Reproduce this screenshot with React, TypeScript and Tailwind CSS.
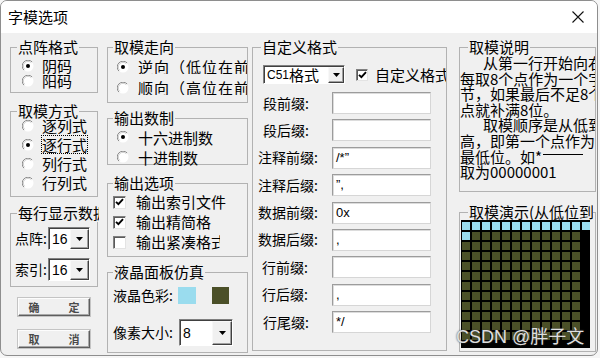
import React from "react";

// classic win32 style widgets
function RadioDot({ checked }: { checked?: boolean }) {
  return (
    <svg width="12" height="12" viewBox="0 0 12 12" className="shrink-0">
      <circle cx="6" cy="6" r="5.5" fill="#fff" />
      <path d="M1.9 10.1 A5.6 5.6 0 0 1 10.1 1.9" fill="none" stroke="#8c8c8c" strokeWidth="1" />
      <path d="M2.7 9.3 A4.6 4.6 0 0 1 9.3 2.7" fill="none" stroke="#cfcfcf" strokeWidth="1" />
      {checked && <circle cx="6" cy="6" r="2" fill="#000" />}
    </svg>
  );
}

function Radio({
  label,
  checked = false,
  focus = false,
  row,
  gap,
  labelClass = "",
}: {
  label: string;
  checked?: boolean;
  focus?: boolean;
  row: string;
  gap: string;
  labelClass?: string;
}) {
  return (
    <div className={`flex items-center whitespace-nowrap ${row}`}>
      <RadioDot checked={checked} />
      <span
        className={`${gap} text-[15px] ${focus ? "leading-[17px] outline-1 outline-dotted outline-black" : "leading-[15px]"} ${labelClass}`}
      >
        {label}
      </span>
    </div>
  );
}

function CheckBox({ checked = false, size }: { checked?: boolean; size: string }) {
  return (
    <span
      className={`${size} shrink-0 bg-white border border-t-[#808080] border-l-[#808080] border-b-[#e3e3e3] border-r-[#e3e3e3] shadow-[inset_1px_1px_0_#5a5a5a] flex items-center justify-center`}
    >
      {checked && (
        <svg width="9" height="8" viewBox="0 0 9 8">
          <path d="M1 3.8 L3.4 6.2 L8 1.2" stroke="#000" strokeWidth="1.9" fill="none" />
        </svg>
      )}
    </span>
  );
}

function Combo({ children, className, btn }: { children: React.ReactNode; className: string; btn: string }) {
  return (
    <div
      className={`flex bg-white border border-t-[#808080] border-l-[#808080] border-b-white border-r-white shadow-[inset_1px_1px_0_#404040] ${className}`}
    >
      <span className="flex-1 flex items-center pl-[3px] pt-[1px] whitespace-nowrap font-['Liberation_Sans','Noto_Sans_CJK_SC',sans-serif]">
        {children}
      </span>
      <span
        className={`${btn} mt-[1px] bg-[#f0f0f0] border border-t-[#f8f8f8] border-l-[#f8f8f8] border-b-[#404040] border-r-[#404040] shadow-[inset_-1px_-1px_0_#a0a0a0] flex items-center justify-center`}
      >
        <svg width="7" height="4" viewBox="0 0 7 4">
          <path d="M0 0 H7 L3.5 4 Z" fill="#000" />
        </svg>
      </span>
    </div>
  );
}

function TextBox({ value }: { value: string }) {
  return (
    <div className="w-[99px] h-[22px] bg-white border border-t-[#9c9c9c] border-l-[#9c9c9c] border-b-[#d6d6d6] border-r-[#d6d6d6] shadow-[inset_1px_1px_0_#dcdcdc] flex items-center pl-[3px] text-[13px] font-['Liberation_Sans','Noto_Sans_CJK_SC',sans-serif]">
      {value}
    </div>
  );
}

function Group({
  title,
  className = "",
  legendClass = "",
  children,
}: {
  title: string;
  className?: string;
  legendClass?: string;
  children?: React.ReactNode;
}) {
  return (
    <fieldset className={`min-w-0 border border-[#b2b2b2] ${className}`}>
      <legend className={`px-[1px] text-[15px] leading-[18px] whitespace-nowrap ${legendClass}`}>{title}</legend>
      {children}
    </fieldset>
  );
}

function Btn({ a, b }: { a: string; b: string }) {
  return (
    <div className="ml-[8px] w-[72px] h-[18px] bg-[#f0f0f0] border border-t-[#fdfdfd] border-l-[#fdfdfd] border-b-[#5e5e5e] border-r-[#5e5e5e] shadow-[inset_-1px_-1px_0_#a8a8a8,0_0_0_1px_#c4c4c4] flex items-center justify-center gap-[29px] text-[11px] leading-[13px] font-bold text-[#4a4a4a]">
      <span>{a}</span>
      <span>{b}</span>
    </div>
  );
}

const fmtRows: [string, string, string][] = [
  ["段前缀:", "", "pl-[10px]"],
  ["段后缀:", "", "pl-[10px]"],
  ["注释前缀:", "/*”", "pl-[5px]"],
  ["注释后缀:", "”,", "pl-[5px]"],
  ["数据前缀:", "0x", "pl-[5px]"],
  ["数据后缀:", ",", "pl-[5px]"],
  ["行前缀:", "", "pl-[9px]"],
  ["行后缀:", ",", "pl-[9px]"],
  ["行尾缀:", "*/", "pl-[10px]"],
];

const note = [
  { t: "从第一行开始向右", i: true },
  { t: "每取8个点作为一个字", i: false },
  { t: "节，如果最后不足8个", i: false },
  { t: "点就补满8位。", i: false },
  { t: "取模顺序是从低到", i: true },
  { t: "高，即第一个点作为", i: false },
  { t: "最低位。如*", i: false, dash: true },
  { t: "取为00000001", i: false },
];

export default function App() {
  const cells = Array.from({ length: 12 * 13 }, (_, i) => {
    const r = Math.floor(i / 13);
    const c = i % 13;
    if (r === 0 || (r === 1 && c === 0)) return "bg-[#9adcee]";
    if (c === 12) return "bg-transparent";
    return "bg-[#4b5028]";
  });

  return (
    <div className="w-[600px] h-[358px] bg-[#f6f6f6] font-['Noto_Sans_CJK_SC',sans-serif] text-black">
      <div className="relative w-[598px] h-[356px] rounded-[7px] border border-[#8e8e8e] bg-[#f0f0f0] overflow-hidden">
        {/* title bar */}
        <div className="h-[32px] bg-white flex items-center justify-between pl-[7px] pr-[13px]">
          <span className="text-[15px] leading-[18px]">字模选项</span>
          <svg width="12" height="12" viewBox="0 0 12 12">
            <path d="M0.5 0.5 L11.5 11.5 M11.5 0.5 L0.5 11.5" stroke="#111" strokeWidth="1.1" />
          </svg>
        </div>

        <div className="flex pt-[5px] pl-[9px]">
          {/* column 1 */}
          <div className="w-[88px] flex flex-col">
            <Group title="点阵格式" className="h-[55px]" legendClass="ml-[6px]">
              <div className="mt-[2px] pl-[11px]">
                <Radio checked label="阴码" row="h-[15px]" gap="ml-[8px]" />
                <Radio label="阳码" row="h-[15px]" gap="ml-[8px]" />
              </div>
            </Group>
            <Group title="取模方式" className="mt-[9px] h-[95px]" legendClass="ml-[6px]">
              <div className="-mt-[4px] pl-[11px]">
                <Radio label="逐列式" row="h-[19px]" gap="ml-[8px]" />
                <Radio checked focus label="逐行式" row="h-[19px]" gap="ml-[8px]" />
                <Radio label="列行式" row="h-[19px]" gap="ml-[8px]" />
                <Radio label="行列式" row="h-[19px]" gap="ml-[8px]" />
              </div>
            </Group>
            <Group title="每行显示数据" className="mt-[7px] h-[83px]" legendClass="ml-[6px] max-w-[82px] overflow-hidden">
              <div className="mt-[5px] pl-[4px] flex flex-col gap-[8px]">
                <div className="flex items-center">
                  <span className="w-[33px] text-[14px]">点阵:</span>
                  <Combo className="w-[42px] h-[23px] text-[14px]" btn="w-[19px]">
                    16
                  </Combo>
                </div>
                <div className="flex items-center">
                  <span className="w-[33px] text-[14px]">索引:</span>
                  <Combo className="w-[42px] h-[23px] text-[14px]" btn="w-[19px]">
                    16
                  </Combo>
                </div>
              </div>
            </Group>
            <div className="mt-[11px]">
              <Btn a="确" b="定" />
            </div>
            <div className="mt-[14px]">
              <Btn a="取" b="消" />
            </div>
          </div>

          {/* column 2 */}
          <div className="ml-[9px] w-[141px] flex flex-col">
            <Group title="取模走向" className="h-[65px]" legendClass="ml-[5px]">
              <div className="pl-[9px]">
                <Radio
                  checked
                  label="逆向（低位在前）"
                  row="h-[21px]"
                  gap="ml-[9px]"
                  labelClass="w-[112px] overflow-hidden tracking-[1px]"
                />
                <Radio
                  label="顺向（高位在前）"
                  row="h-[21px]"
                  gap="ml-[9px]"
                  labelClass="w-[112px] overflow-hidden tracking-[1px]"
                />
              </div>
            </Group>
            <Group title="输出数制" className="mt-[6px] h-[56px]" legendClass="ml-[5px]">
              <div className="pl-[9px]">
                <Radio checked label="十六进制数" row="h-[20px]" gap="ml-[9px]" />
                <Radio label="十进制数" row="h-[20px]" gap="ml-[9px]" />
              </div>
            </Group>
            <Group title="输出选项" className="mt-[9px] h-[83px]" legendClass="ml-[5px]">
              <div className="pl-[5px] text-[15px] leading-[18px] whitespace-nowrap">
                <div className="flex items-center h-[20px]">
                  <CheckBox checked size="w-[13px] h-[13px]" />
                  <span className="ml-[10px]">输出索引文件</span>
                </div>
                <div className="flex items-center h-[20px]">
                  <CheckBox checked size="w-[13px] h-[13px]" />
                  <span className="ml-[10px]">输出精简格</span>
                </div>
                <div className="flex items-center h-[20px]">
                  <CheckBox size="w-[13px] h-[13px]" />
                  <span className="ml-[10px] w-[84px] overflow-hidden">输出紧凑格式</span>
                </div>
              </div>
            </Group>
            <Group title="液晶面板仿真" className="mt-[6px] h-[90px]" legendClass="ml-[5px]">
              <div className="pl-[5px]">
                <div className="mt-[6px] flex items-center h-[17px]">
                  <span className="w-[65px] text-[14px] leading-[17px]">液晶色彩:</span>
                  <span className="w-[18px] h-[17px] bg-[#9adcee]" />
                  <span className="ml-[16px] w-[17px] h-[17px] bg-[#4b5028]" />
                </div>
                <div className="mt-[15px] flex items-center">
                  <span className="w-[66px] text-[14px]">像素大小:</span>
                  <Combo className="w-[54px] h-[27px] text-[14px]" btn="w-[20px]">
                    8
                  </Combo>
                </div>
              </div>
            </Group>
          </div>

          {/* column 3 */}
          <div className="ml-[4px] w-[195px]">
            <Group title="自定义格式" className="h-[313px]" legendClass="ml-[8px]">
              <div className="mt-[9px] pl-[10px] flex items-center h-[19px] whitespace-nowrap">
                <Combo className="w-[82px] h-[19px] shrink-0" btn="w-[16px]">
                  <span className="text-[12px] leading-[15px]">C51</span>
                  <span className="text-[15px] leading-[15px]">格式</span>
                </Combo>
                <span className="ml-[11px]">
                  <CheckBox checked size="w-[12px] h-[12px]" />
                </span>
                <span className="ml-[7px] w-[71px] overflow-hidden text-[15px] leading-[18px]">自定义格式</span>
              </div>
              <div className="mt-[8px] flex flex-col gap-[5.4px]">
                {fmtRows.map(([label, val, pad]) => (
                  <div key={label} className="flex items-center h-[22px]">
                    <span className={`w-[79px] text-[14px] whitespace-nowrap ${pad}`}>{label}</span>
                    <TextBox value={val} />
                  </div>
                ))}
              </div>
            </Group>
          </div>

          {/* column 4 */}
          <div className="ml-[12px] w-[137px] flex flex-col">
            <Group title="取模说明" className="h-[154px]" legendClass="ml-[8px]">
              <div className="-mt-[1px] w-[135px] overflow-hidden text-[15px] leading-[15.6px] whitespace-nowrap">
                {note.map((l) => (
                  <p key={l.t} className={`${l.i ? "indent-[23px]" : ""} ${l.dash ? "flex items-center" : ""}`}>
                    {l.t}
                    {l.dash && <span className="ml-[1px] -mt-[3px] w-[40px] h-[1px] bg-black" />}
                  </p>
                ))}
              </div>
            </Group>
            <Group
              title="取模演示(从低位到高位)"
              className="mt-[11px] h-[149px]"
              legendClass="ml-[8px] max-w-[125px] overflow-hidden"
            >
              <div className="-mt-[1px] ml-[1px] w-[129px] h-[128px] bg-black pl-[1px] pt-[2px]">
                <div className="grid grid-cols-[repeat(13,8px)] gap-[2px]">
                  {cells.map((c, i) => (
                    <div key={i} className={`w-[8px] h-[8px] ${c}`} />
                  ))}
                </div>
              </div>
            </Group>
          </div>
        </div>

        {/* watermark */}
        <div className="absolute left-[455px] top-[325px] text-[18px] leading-[22px] text-[#dedede] whitespace-nowrap font-['Liberation_Sans','Noto_Sans_CJK_SC',sans-serif] [text-shadow:0_0_2px_#3a3a3a]">
          CSDN @胖子文
        </div>
      </div>
    </div>
  );
}
